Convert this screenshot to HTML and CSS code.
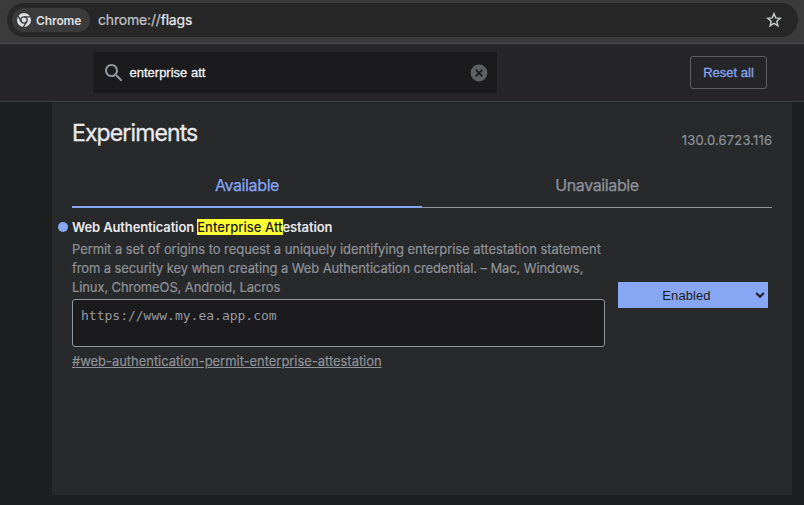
FILE: index.html
```html
<!DOCTYPE html>
<html lang="en">
<head>
<meta charset="utf-8">
<title>Experiments</title>
<link rel="stylesheet" href="styles.css">
</head>
<body>
<div class="toolbar">
  <div class="omnibox">
    <div class="chip">
      <svg width="14" height="14" viewBox="0 0 14 14"><circle cx="7" cy="7" r="7" fill="#dedfe0"/><circle cx="7" cy="7" r="3.1" fill="none" stroke="#3b3b3c" stroke-width="1.3"/><path d="M7 3.9h6.6M4.3 8.6L1 2.9M9.7 8.6L6.4 14" stroke="#3b3b3c" stroke-width="1.3"/></svg>
      <span class="chip-label">Chrome</span>
    </div>
    <div class="url"><span class="scheme">chrome://</span>flags</div>
    <svg class="star" width="16" height="16" viewBox="0 0 16 16"><path d="M8 1.7l1.75 4.2 4.55.4-3.45 3 1.03 4.45L8 11.4l-3.88 2.35L5.15 9.3 1.7 6.3l4.55-.4z" fill="none" stroke="#c8c9ca" stroke-width="1.5"/></svg>
  </div>
</div>
<header class="header">
  <div class="search">
    <svg width="24" height="24" viewBox="0 0 24 24"><path fill="#9097a0" d="M15.5 14h-.79l-.28-.27C15.41 12.59 16 11.11 16 9.5 16 5.91 13.09 3 9.5 3S3 5.91 3 9.5 5.91 16 9.5 16c1.61 0 3.09-.59 4.23-1.57l.27.28v.79l5 4.99L20.49 19l-4.99-5zm-6 0C7.01 14 5 11.99 5 9.5S7.01 5 9.5 5 14 7.01 14 9.5 11.99 14 9.5 14z"/></svg>
    <span class="query">enterprise att</span>
    <svg class="clear" width="18" height="18" viewBox="0 0 18 18"><circle cx="9" cy="9" r="8.4" fill="#5d6065"/><path d="M5.7 5.7l6.6 6.6M12.3 5.7l-6.6 6.6" stroke="#1c1c1e" stroke-width="1.7"/></svg>
  </div>
  <button class="reset">Reset all</button>
</header>
<main class="panel">
  <div class="heading">
    <h1>Experiments</h1>
    <span class="version">130.0.6723.116</span>
  </div>
  <div class="tabs">
    <div class="tab active"><span>Available</span></div>
    <div class="tab"><span>Unavailable</span></div>
  </div>
  <section class="experiment">
    <div class="info">
      <h2><i class="dot"></i>Web Authentication <mark>Enterprise Att</mark>estation</h2>
      <p><span class="l1">Permit a set of origins to request a uniquely identifying enterprise attestation statement</span><br><span class="l2">from a security key when creating a Web Authentication credential. – Mac, Windows,</span><br><span class="l2">Linux, ChromeOS, Android, Lacros</span></p>
      <div class="origins">https://www.my.ea.app.com</div>
      <a class="permalink">#web-authentication-permit-enterprise-attestation</a>
    </div>
    <div class="select"><span>Enabled</span><svg width="10" height="8" viewBox="0 0 10 8"><path d="M1.2 2L5 5.8 8.8 2" fill="none" stroke="#1b1c1f" stroke-width="2"/></svg></div>
  </section>
</main>
</body>
</html>
```
FILE: styles.css
```css
* { box-sizing: border-box; }
body {
  margin: 0;
  height: 505px;
  overflow: hidden;
  background: #1e1f21;
  color: #e8eaed;
  font-family: Inter, sans-serif;
  font-size: 13px;
}
.toolbar {
  height: 44px;
  padding: 3px 6px 0 7px;
  background: #3b3b3c;
  border-bottom: 1px solid #48494b;
}
.omnibox {
  display: flex;
  align-items: center;
  height: 34px;
  padding: 0 16px 0 5px;
  border-radius: 17px;
  background: #272728;
}
.chip {
  display: flex;
  align-items: center;
  gap: 5px;
  width: 78px;
  height: 24px;
  padding-left: 5px;
  border-radius: 12px;
  background: #3b3b3c;
}
.chip-label { font-size: 12px; font-weight: 600; letter-spacing: -.1px; color: #dfe0e1; }
.url { margin: -2px 0 0 8px; font-size: 14px; letter-spacing: -.18px; color: #e8eaed; -webkit-text-stroke: .2px; }
.scheme { color: #c3c5c8; }
.star { margin-left: auto; }
.header {
  display: flex;
  align-items: center;
  justify-content: space-between;
  height: 58px;
  padding: 0 37px 0 93px;
  background: #262628;
  border-bottom: 1px solid #3c3d40;
}
.search {
  display: flex;
  align-items: center;
  width: 404px;
  height: 41px;
  padding: 0 9px;
  border-radius: 3px;
  background: #1b1b1d;
}
.query {
  margin-left: 3.5px;
  font-family: "Liberation Sans", sans-serif;
  font-size: 13px;
  color: #f0f1f3;
  -webkit-text-stroke: .3px #f0f1f3;
}
.clear { margin-left: auto; }
.reset {
  width: 77px;
  height: 33px;
  padding: 0;
  border: 1px solid #5b5d61;
  border-radius: 3px;
  background: none;
  color: #87a6f3;
  font: 13px "Liberation Sans", sans-serif;
  -webkit-text-stroke: .3px #87a6f3;
}
.panel {
  width: 740px;
  height: 393px;
  margin-left: 52px;
  padding: 17px 20px 0;
  background: #28292b;
}
.heading {
  display: flex;
  justify-content: space-between;
  height: 45px;
}
h1 { margin: 0; font-size: 23px; line-height: 28px; font-weight: 400; letter-spacing: -.88px; -webkit-text-stroke: .3px; }
.version { padding-top: 11px; line-height: 20px; letter-spacing: .15px; margin-right: -.15px; color: #8e9299; -webkit-text-stroke: .2px; }
.tabs { display: flex; height: 44px; }
.tab {
  flex: 1;
  border-bottom: 1px solid #929498;
  color: #8e9299;
  font-size: 16px;
  line-height: 42px;
  letter-spacing: -.38px;
  text-align: center;
  -webkit-text-stroke: .25px;
}
.tab.active { border-bottom: 2px solid #87a6f3; color: #87a6f3; }
.experiment { display: flex; justify-content: space-between; padding: 10px 4px 0 0; }
.info { width: 533px; }
h2 { position: relative; margin: 0; font-size: 13px; line-height: 19px; font-weight: 600; letter-spacing: -.13px; white-space: nowrap; }
.dot {
  position: absolute;
  left: -14px;
  top: 4px;
  width: 10px;
  height: 10px;
  border-radius: 50%;
  background: #87a6f3;
}
mark { background: #ffff33; color: #1b1b1d; font-weight: 500; letter-spacing: .04px; }
p { margin: 3px 0 2px; line-height: 19px; color: #8e9299; white-space: nowrap; -webkit-text-stroke: .2px; }
.l1 { letter-spacing: -.065px; }
.l2 { letter-spacing: -.11px; }
.origins {
  height: 48px;
  padding: 8px;
  border: 1px solid #91959c;
  border-radius: 3px;
  background: #1b1b1d;
  color: #959aa2;
  font: 13px/16px "DejaVu Sans Mono", monospace;
}
.permalink { display: block; width: max-content; margin-top: 5px; line-height: 19px; letter-spacing: -.04px; color: #8e9299; text-decoration: underline; -webkit-text-stroke: .2px; }
.select {
  display: flex;
  align-items: center;
  width: 150px;
  height: 26px;
  margin-top: 64px;
  padding-right: 3px;
  background: #87a6f3;
  color: #1b1c1f;
  font-family: "Liberation Sans", sans-serif;
}
.select span { flex: 1; text-align: center; letter-spacing: .1px; }
```
